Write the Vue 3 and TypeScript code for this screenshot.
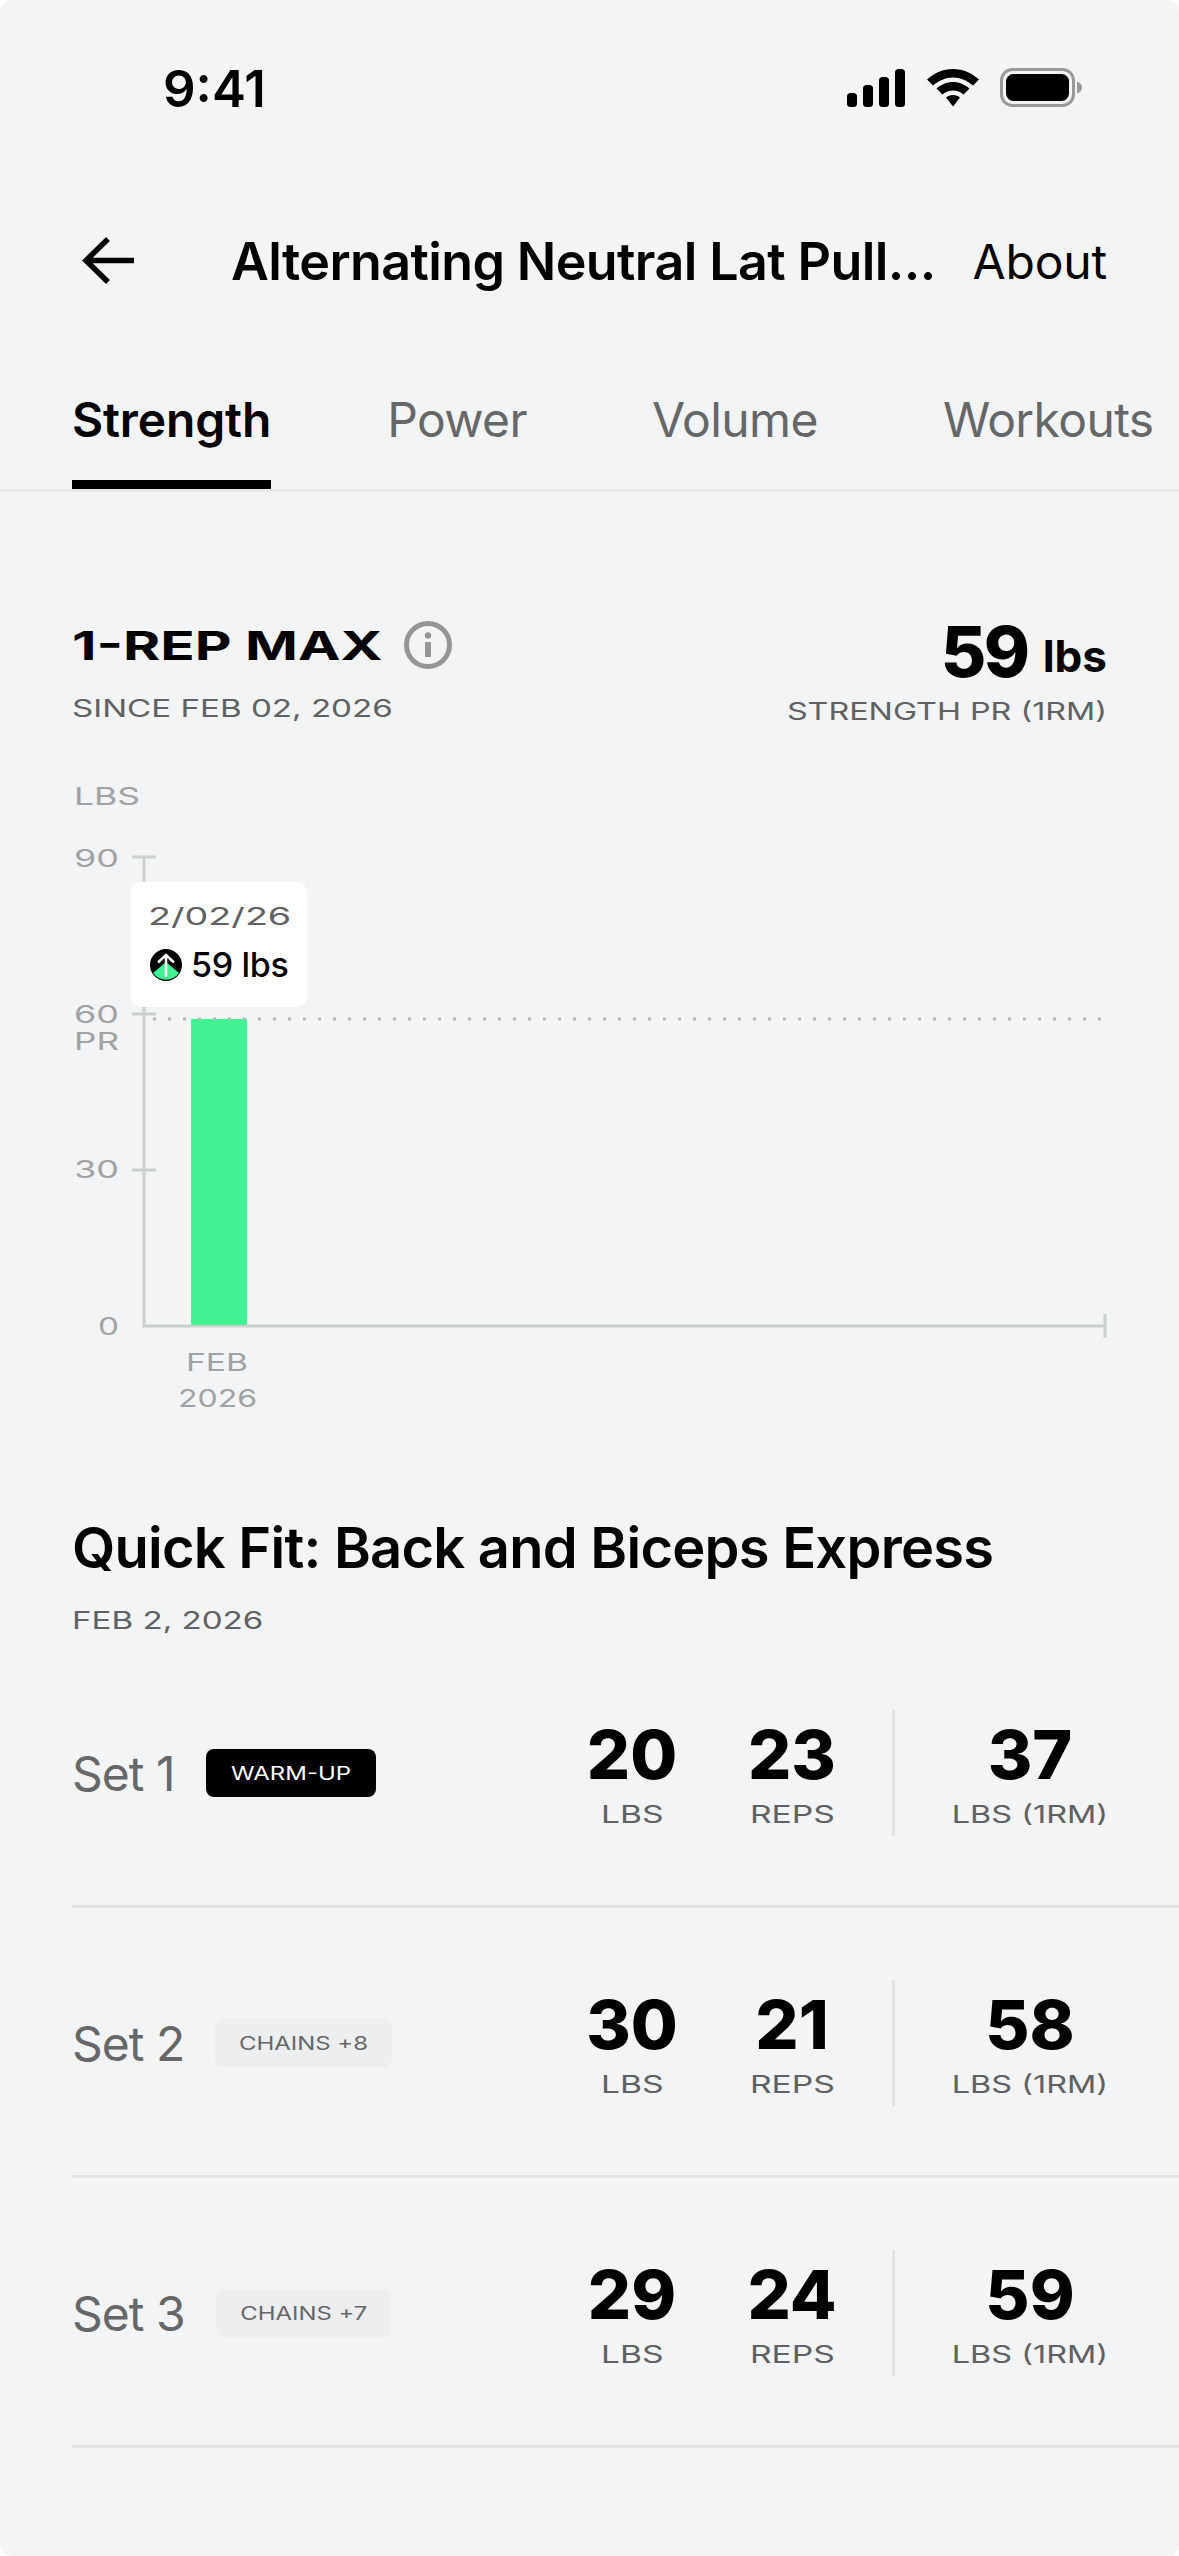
<template>
  <div class="screen">
    <div class="status-bar">
      <span class="time">9:41</span>
      <div class="status-icons">
        <svg width="60" height="38" viewBox="0 0 60 38">
          <rect x="1" y="24" width="10" height="14" rx="3.5" />
          <rect x="17" y="16" width="10" height="22" rx="3.5" />
          <rect x="33" y="8" width="10" height="30" rx="3.5" />
          <rect x="49" y="0" width="10" height="38" rx="3.5" />
        </svg>
        <svg width="52" height="38" viewBox="0 0 52 38">
          <path d="M26 0C16 0 7.500 4 0 10.500L6 16.500C12 11.500 18.500 8.500 26 8.500S40 11.500 46 16.500L52 10.500C44.500 4 36 0 26 0Z" />
          <path d="M26 13C19.500 13 14.500 15.500 9.500 19.500L15.500 25.500C18.500 23 22 21.500 26 21.500S33.500 23 36.500 25.500L42.500 19.500C37.500 15.500 32.500 13 26 13Z" />
          <path d="M26 26C23 26 21 27 19 28.500L26 37.500L33 28.500C31 27 29 26 26 26Z" />
        </svg>
        <svg width="82" height="40" viewBox="0 0 82 40">
          <rect x="1.500" y="1.500" width="72" height="36" rx="11" class="batt-frame" />
          <rect x="6" y="6" width="63" height="27" rx="7.500" />
          <path d="M77 13.500C80 14.500 82 16.500 82 19.500S80 24.500 77 25.500Z" class="batt-cap" />
        </svg>
      </div>
    </div>

    <header class="nav">
      <svg class="back" width="54" height="48" viewBox="0 0 54 48">
        <path d="M52 23.500H4M26 2L4 23.500L26 45" />
      </svg>
      <h1 class="nav-title">Alternating Neutral Lat Pull...</h1>
      <span class="nav-about">About</span>
    </header>

    <nav class="tabs">
      <span
        v-for="tab in tabs"
        :key="tab"
        class="tab"
        :class="{ active: tab === 'Strength' }"
      >{{ tab }}</span>
    </nav>

    <section class="summary">
      <div>
        <div class="summary-title">
          <span class="wide-strong">1-REP MAX</span>
          <svg class="info" width="48" height="48" viewBox="0 0 48 48">
            <circle cx="24" cy="24" r="21.500" />
            <circle cx="24" cy="14.500" r="3.200" class="dot" />
            <rect x="21" y="21" width="6" height="15" class="dot" />
          </svg>
        </div>
        <div class="wide-sub">SINCE FEB 02, 2026</div>
      </div>
      <div class="summary-right">
        <div class="pr-value"><b>59</b><span>lbs</span></div>
        <div class="wide-sub wide-right">STRENGTH PR (1RM)</div>
      </div>
    </section>

    <div class="chart">
      <svg width="1179" height="640" viewBox="0 780 1179 640">
        <g class="axis">
          <path d="M144 857V1326H1105M132 857H156M132 1014H156M132 1170H156M1105 1314V1338" />
        </g>
        <rect x="191" y="1019" width="56" height="306" rx="1" class="bar" />
        <line x1="153" y1="1019" x2="1105" y2="1019" class="pr-line" />
        <g class="chart-label">
          <text x="74" y="805" textLength="66" lengthAdjust="spacingAndGlyphs">LBS</text>
          <text x="74" y="867" textLength="45" lengthAdjust="spacingAndGlyphs">90</text>
          <text x="74" y="1023" textLength="45" lengthAdjust="spacingAndGlyphs">60</text>
          <text x="74" y="1050" textLength="45" lengthAdjust="spacingAndGlyphs">PR</text>
          <text x="74" y="1178" textLength="45" lengthAdjust="spacingAndGlyphs">30</text>
          <text x="98" y="1335" textLength="21" lengthAdjust="spacingAndGlyphs">0</text>
          <text x="186" y="1371" textLength="62" lengthAdjust="spacingAndGlyphs">FEB</text>
          <text x="178" y="1407" textLength="79" lengthAdjust="spacingAndGlyphs">2026</text>
        </g>
      </svg>
      <div class="tooltip">
        <div class="tooltip-date">2/02/26</div>
        <div class="tooltip-value">
          <svg width="32" height="32" viewBox="0 0 32 32">
            <circle cx="16" cy="16" r="16" fill="#000" />
            <path d="M16 13L29 24A16 16 0 0 1 3 24Z" fill="#40f292" />
            <path d="M16 28V7M8 13.500L16 6L24 13.500" fill="none" stroke="#fff" stroke-width="2.500" />
          </svg>
          <span>59 lbs</span>
        </div>
      </div>
    </div>

    <section class="workout">
      <h2 class="workout-title">Quick Fit: Back and Biceps Express</h2>
      <div class="wide-sub">FEB 2, 2026</div>
    </section>

    <div class="sets">
      <div v-for="set in sets" :key="set.name" class="set-row">
        <div class="set-name">
          <span>{{ set.name }}</span>
          <span class="badge" :class="{ warm: set.warm }"><i>{{ set.badge }}</i></span>
        </div>
        <div class="set-stats">
          <div class="stat">
            <b>{{ set.lbs }}</b>
            <span>LBS</span>
          </div>
          <div class="stat">
            <b>{{ set.reps }}</b>
            <span>REPS</span>
          </div>
          <div class="stat-divider"></div>
          <div class="stat stat-max">
            <b>{{ set.max }}</b>
            <span>LBS (1RM)</span>
          </div>
        </div>
      </div>
    </div>
  </div>
</template>

<script setup lang="ts">
interface WorkoutSet {
  name: string
  badge: string
  warm: boolean
  lbs: number
  reps: number
  max: number
}

const tabs = ["Strength", "Power", "Volume", "Workouts"]

const sets: WorkoutSet[] = [
  { name: "Set 1", badge: "WARM-UP", warm: true, lbs: 20, reps: 23, max: 37 },
  { name: "Set 2", badge: "CHAINS +8", warm: false, lbs: 30, reps: 21, max: 58 },
  { name: "Set 3", badge: "CHAINS +7", warm: false, lbs: 29, reps: 24, max: 59 },
]
</script>

<style>
body {
  background: #fff;
}
</style>

<style scoped>
.screen {
  width: 1179px;
  height: 2556px;
  overflow: hidden;
  border-radius: 12px;
  background: #f3f4f6;
  color: #000;
  font-family: Inter, "Liberation Sans", sans-serif;
}

.status-bar {
  display: flex;
  justify-content: space-between;
  align-items: center;
  height: 176px;
  padding: 0 97px 0 163px;
}

.time {
  font-size: 51px;
  font-weight: 600;
  line-height: 1;
}

.status-icons {
  display: flex;
  align-items: center;
  gap: 21px;
}

.batt-frame {
  fill: none;
  stroke: #98999b;
  stroke-width: 3;
}

.batt-cap {
  fill: #98999b;
}

.nav {
  display: flex;
  align-items: center;
  height: 170px;
  padding: 0 72px 0 82px;
}

.back {
  flex: none;
  margin-right: 95px;
  fill: none;
  stroke: #000;
  stroke-width: 5.500;
}

.nav-title {
  flex: 1;
  margin: 0;
  font-size: 52px;
  font-weight: 600;
  letter-spacing: -0.6px;
  white-space: nowrap;
}

.nav-about {
  font-size: 48px;
  letter-spacing: -0.2px;
}

.tabs {
  display: flex;
  height: 143px;
  padding-left: 72px;
  border-bottom: 3px solid #e7e8ea;
  gap: 125px;
}

.tab {
  box-sizing: border-box;
  height: 143px;
  padding-top: 36px;
  font-size: 48px;
  line-height: 76px;
  letter-spacing: -0.6px;
  color: #666769;
  white-space: nowrap;
}

.tab.active {
  margin-right: -9px;
  font-weight: 600;
  letter-spacing: -0.15px;
  color: #000;
  border-bottom: 9px solid #000;
}

.summary {
  display: flex;
  justify-content: space-between;
  height: 288px;
  box-sizing: border-box;
  padding: 129px 72px 0;
}

.summary-title {
  display: flex;
  align-items: center;
  height: 48px;
}

.wide-strong {
  display: inline-block;
  width: 308px;
  font-size: 40px;
  font-weight: 700;
  white-space: nowrap;
  transform: scaleX(1.42);
  transform-origin: left;
}

.info {
  margin-left: 24px;
  fill: none;
  stroke: #959698;
  stroke-width: 5;
}

.info .dot {
  fill: #959698;
  stroke: none;
}

.wide-sub {
  margin-top: 28px;
  font-size: 24px;
  line-height: 24px;
  color: #5f6163;
  white-space: nowrap;
  transform: scaleX(1.38);
  transform-origin: left;
}

.wide-right {
  margin-top: -7px;
  transform: scaleX(1.345);
  transform-origin: right;
}

.summary-right {
  margin-top: -5px;
  text-align: right;
}

.pr-value {
  line-height: 72px;
}

.pr-value b {
  font-size: 70px;
  font-weight: 800;
  letter-spacing: -2.5px;
}

.pr-value span {
  margin-left: 15px;
  font-size: 44px;
  font-weight: 700;
  vertical-align: 5px;
}

.chart {
  position: relative;
  height: 640px;
}

.chart svg {
  display: block;
}

.axis path {
  fill: none;
  stroke: #c9d0d0;
  stroke-width: 3;
}

.pr-line {
  stroke: #b5b7b9;
  stroke-width: 3;
  stroke-dasharray: 3 12;
}

.bar {
  fill: #40f292;
}

.chart-label text {
  font-size: 24px;
  fill: #a0a2a4;
}

.tooltip {
  position: absolute;
  left: 131px;
  top: 102px;
  width: 176px;
  height: 125px;
  box-sizing: border-box;
  padding: 20px 19px 0;
  border-radius: 10px;
  background: #fff;
}

.tooltip-date {
  margin-left: -2px;
  font-size: 24px;
  line-height: 30px;
  color: #5f6163;
  white-space: nowrap;
  transform: scaleX(1.57);
  transform-origin: left;
}

.tooltip-value {
  display: flex;
  align-items: center;
  gap: 9px;
  margin-top: 12px;
  font-size: 34px;
  font-weight: 500;
  line-height: 42px;
  letter-spacing: -0.3px;
  white-space: nowrap;
}

.tooltip-value svg {
  flex: none;
}

.workout {
  height: 124px;
  box-sizing: border-box;
  margin-top: 94px;
  padding: 0 72px;
}

.workout-title {
  margin: 0;
  font-size: 56px;
  font-weight: 600;
  line-height: 68px;
  letter-spacing: -0.75px;
  white-space: nowrap;
}

.workout .wide-sub {
  margin-top: 27px;
}

.sets {
  margin-left: 72px;
}

.set-row {
  display: flex;
  align-items: center;
  justify-content: space-between;
  height: 270px;
  box-sizing: border-box;
  padding: 3px 72px 0 0;
  border-bottom: 3px solid #e2e3e5;
}

.set-name {
  display: flex;
  align-items: center;
  gap: 31px;
  font-size: 48px;
  letter-spacing: -1px;
  color: #666769;
}

.badge {
  display: flex;
  align-items: center;
  justify-content: center;
  height: 48px;
  padding: 0 40px;
  border-radius: 8px;
  background: #eceef0;
  letter-spacing: 0;
  color: #666769;
}

.badge.warm {
  background: #000;
  color: #fff;
}

.badge i {
  font-size: 18px;
  font-style: normal;
  white-space: nowrap;
  transform: scaleX(1.33);
}

.set-stats {
  display: flex;
  align-items: center;
  height: 126px;
}

.stat {
  display: flex;
  flex-direction: column;
  align-items: center;
  width: 160px;
}

.stat b {
  font-size: 68px;
  font-weight: 800;
  line-height: 72px;
}

.stat span {
  margin-top: 11px;
  font-size: 24px;
  line-height: 28px;
  color: #5f6163;
  white-space: nowrap;
  transform: scaleX(1.4);
}

.stat-divider {
  width: 3px;
  height: 126px;
  margin: 0 58px 0 20px;
  background: #e2e3e5;
}

.stat-max {
  width: 154px;
}

.stat-max span {
  transform: scaleX(1.35);
}
</style>
